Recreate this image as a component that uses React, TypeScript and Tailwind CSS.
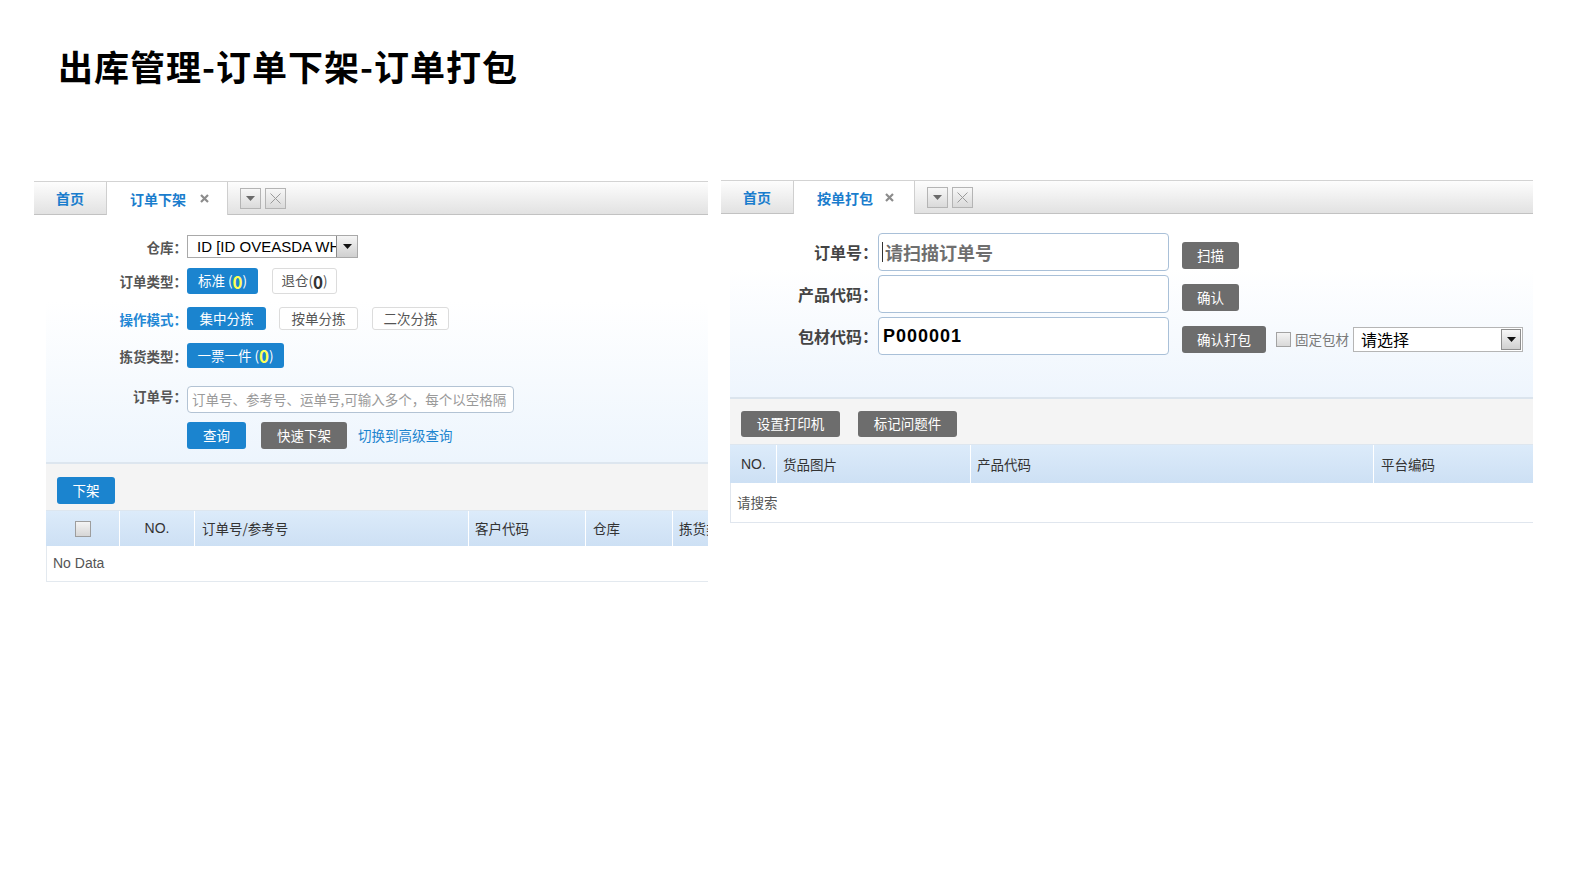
import React from "react";

function DropBox() {
  return (
    <div className="w-[21px] h-[21px] border border-[#b4b4b4] bg-gradient-to-b from-[#f7f7f7] to-[#dadada] flex items-center justify-center">
      <svg width="9" height="5" viewBox="0 0 9 5">
        <path d="M0 0H9L4.5 5Z" fill="#6a6a6a" />
      </svg>
    </div>
  );
}

function XBox() {
  return (
    <div className="w-[21px] h-[21px] border border-[#b4b4b4] bg-gradient-to-b from-[#f7f7f7] to-[#dadada] flex items-center justify-center">
      <svg width="11" height="11" viewBox="0 0 11 11">
        <path d="M0.5 0.5L10.5 10.5M10.5 0.5L0.5 10.5" stroke="#9a9a9a" strokeWidth="1" />
      </svg>
    </div>
  );
}

function TabBar({ label, xGap }: { label: string; xGap: string }) {
  return (
    <div className="flex h-[34px] border-t border-[#d3d3d3]">
      <div className="w-[73px] shrink-0 flex items-center justify-center border-b border-r border-b-[#c2c2c2] border-r-[#cfcfcf] bg-gradient-to-b from-[#fdfdfd] to-[#e2e2e2] text-[14px] font-bold text-[#1a7dcd]">
        首页
      </div>
      <div className="w-[121px] shrink-0 flex items-center bg-white border-r border-[#cfcfcf] pl-[23px]">
        <span className="text-[14px] font-bold text-[#1a7dcd] leading-none">{label}</span>
        <svg className={xGap} width="9" height="9" viewBox="0 0 9 9">
          <path d="M1 1L8 8M8 1L1 8" stroke="#8c8c8c" strokeWidth="2.2" />
        </svg>
      </div>
      <div className="flex-1 flex items-center border-b border-[#c2c2c2] bg-gradient-to-b from-[#fdfdfd] to-[#e2e2e2] pl-[12px] gap-[4px]">
        <DropBox />
        <XBox />
      </div>
    </div>
  );
}

function BlueBtn({ w, h, children }: { w: string; h: string; children: React.ReactNode }) {
  return (
    <div className={`${w} ${h} shrink-0 rounded-[3px] bg-[#1b84cf] text-white text-[13.5px] flex items-center justify-center leading-none`}>
      {children}
    </div>
  );
}

function WhiteBtn({ w, h, children }: { w: string; h: string; children: React.ReactNode }) {
  return (
    <div className={`${w} ${h} shrink-0 rounded-[3px] bg-white border border-[#dcdcdc] text-[#555] text-[13.5px] flex items-center justify-center leading-none`}>
      {children}
    </div>
  );
}

function GrayBtn({ w, h, children }: { w: string; h: string; children: React.ReactNode }) {
  return (
    <div className={`${w} ${h} shrink-0 rounded-[3px] bg-[#6d6d6d] text-white text-[13.5px] flex items-center justify-center leading-none`}>
      {children}
    </div>
  );
}

function LeftPanel() {
  const label = "w-[141px] shrink-0 text-right text-[13.5px] font-semibold text-[#555] leading-[20px]";
  return (
    <div className="w-[674px] mt-[1px]">
      <TabBar label="订单下架" xGap="ml-[14px]" />
      <div className="ml-[12px] h-[249px] border-b-2 border-[#dde6ef] bg-gradient-to-b from-white from-35% to-[#edf5fd] pt-[20px]">
        {/* 仓库 */}
        <div className="flex items-center h-[23px]">
          <div className={label}>仓库：</div>
          <div className="relative w-[171px] h-[23px] border border-[#a9a9a9] bg-white overflow-hidden">
            <div className="pl-[9px] pr-[22px] font-['Liberation_Sans',sans-serif] text-[15px] text-black leading-[21px] whitespace-nowrap overflow-hidden">
              ID [ID OVEASDA WH
            </div>
            <div className="absolute right-0 top-0 w-[21px] h-[21px] border-l border-[#8a8a8a] bg-gradient-to-b from-[#f5f5f5] to-[#cfcfcf] flex items-center justify-center">
              <svg width="9" height="5" viewBox="0 0 9 5">
                <path d="M0 0H9L4.5 5Z" fill="#111" />
              </svg>
            </div>
          </div>
        </div>
        {/* 订单类型 */}
        <div className="flex items-center h-[26px] mt-[10px]">
          <div className={label}>订单类型：</div>
          <BlueBtn w="w-[71px]" h="h-[26px]">
            <span>标准&nbsp;(</span>
            <span className="text-[#ffff55] font-bold text-[17px]">0</span>
            <span>)</span>
          </BlueBtn>
          <div className="ml-[14px]">
            <WhiteBtn w="w-[65px]" h="h-[26px]">
              <span>退仓(</span>
              <span className="text-[#333] font-bold text-[17px]">0</span>
              <span>)</span>
            </WhiteBtn>
          </div>
        </div>
        {/* 操作模式 */}
        <div className="flex items-center h-[23px] mt-[13px]">
          <div className="w-[141px] shrink-0 text-right text-[13.5px] font-semibold text-[#2488d5] leading-[20px]">操作模式：</div>
          <BlueBtn w="w-[79px]" h="h-[23px]">集中分拣</BlueBtn>
          <div className="ml-[13px]">
            <WhiteBtn w="w-[79px]" h="h-[23px]">按单分拣</WhiteBtn>
          </div>
          <div className="ml-[14px]">
            <WhiteBtn w="w-[77px]" h="h-[23px]">二次分拣</WhiteBtn>
          </div>
        </div>
        {/* 拣货类型 */}
        <div className="flex items-center h-[25px] mt-[13px]">
          <div className={label}>拣货类型：</div>
          <BlueBtn w="w-[97px]" h="h-[25px]">
            <span>一票一件&nbsp;(</span>
            <span className="text-[#ffff55] font-bold text-[17px]">0</span>
            <span>)</span>
          </BlueBtn>
        </div>
        {/* 订单号 */}
        <div className="flex items-start h-[27px] mt-[18px]">
          <div className={label}>订单号：</div>
          <div className="w-[327px] h-[27px] rounded-[4px] border border-[#b3c3d4] bg-white pl-[4px] text-[13.5px] text-[#9a9a9a] leading-[25px] whitespace-nowrap overflow-hidden">
            订单号、参考号、运单号,可输入多个，每个以空格隔
          </div>
        </div>
        {/* buttons */}
        <div className="flex items-center h-[27px] mt-[9px] pl-[141px]">
          <BlueBtn w="w-[59px]" h="h-[27px]">查询</BlueBtn>
          <div className="ml-[15px]">
            <GrayBtn w="w-[86px]" h="h-[27px]">快速下架</GrayBtn>
          </div>
          <div className="ml-[11px] text-[13.5px] text-[#1b84cf]">切换到高级查询</div>
        </div>
      </div>
      {/* toolbar */}
      <div className="ml-[12px] h-[46px] bg-[#f4f4f4] pl-[11px] pt-[13px]">
        <BlueBtn w="w-[58px]" h="h-[27px]">下架</BlueBtn>
      </div>
      {/* header */}
      <div className="ml-[12px] h-[36px] flex border-t border-[#dde6ef] bg-gradient-to-b from-[#dcebfa] to-[#cde0f4] text-[13.5px] text-[#333] overflow-hidden whitespace-nowrap">
        <div className="w-[74px] shrink-0 flex items-center justify-center border-r border-white">
          <div className="w-[16px] h-[16px] border border-[#9d9d9d] bg-gradient-to-b from-[#f4f4f4] to-[#d6d6d6]" />
        </div>
        <div className="w-[75px] shrink-0 flex items-center justify-center border-r border-white font-['Liberation_Sans',sans-serif] text-[14px]">NO.</div>
        <div className="w-[274px] shrink-0 flex items-center pl-[7px] border-r border-white">订单号/参考号</div>
        <div className="w-[117px] shrink-0 flex items-center pl-[6px] border-r border-white">客户代码</div>
        <div className="w-[87px] shrink-0 flex items-center pl-[7px] border-r border-white">仓库</div>
        <div className="w-[87px] shrink-0 flex items-center pl-[6px]">拣货类型</div>
      </div>
      <div className="ml-[12px] h-[36px] border-b border-l border-[#e3e9ef] bg-white flex items-center pl-[6px] font-['Liberation_Sans',sans-serif] text-[14px] text-[#555]">
        No Data
      </div>
    </div>
  );
}

function RightPanel() {
  const label = "w-[148px] shrink-0 text-right text-[16px] font-semibold text-[#444] leading-[22px]";
  const input = "w-[291px] h-[38px] shrink-0 rounded-[4px] border border-[#a9c0d8] bg-white";
  return (
    <div className="w-[812px] ml-[13px]">
      <TabBar label="按单打包" xGap="ml-[12px]" />
      <div className="ml-[9px] h-[185px] border-b-2 border-[#dbe4ed] bg-gradient-to-b from-white from-30% to-[#eef5fd] pt-[19px]">
        <div className="flex items-center h-[38px]">
          <div className={label}>订单号：</div>
          <div className={`${input} flex items-center pl-[3px]`}>
            <div className="w-[1px] h-[20px] bg-[#333]" />
            <span className="ml-[2px] text-[18px] font-semibold text-[#6f6f6f] leading-none">请扫描订单号</span>
          </div>
          <div className="ml-[13px] mt-[7px]">
            <GrayBtn w="w-[57px]" h="h-[27px]">扫描</GrayBtn>
          </div>
        </div>
        <div className="flex items-center h-[38px] mt-[4px]">
          <div className={label}>产品代码：</div>
          <div className={input} />
          <div className="ml-[13px] mt-[7px]">
            <GrayBtn w="w-[57px]" h="h-[27px]">确认</GrayBtn>
          </div>
        </div>
        <div className="flex items-center h-[38px] mt-[4px]">
          <div className={label}>包材代码：</div>
          <div className={`${input} flex items-center pl-[4px]`}>
            <span className="font-['Liberation_Sans',sans-serif] text-[18px] font-bold text-black tracking-[1px] leading-none">P000001</span>
          </div>
          <div className="ml-[13px] mt-[7px] flex items-center">
            <GrayBtn w="w-[84px]" h="h-[27px]">确认打包</GrayBtn>
            <div className="ml-[10px] w-[15px] h-[15px] border border-[#a3a3a3] bg-gradient-to-b from-[#f4f4f4] to-[#d9d9d9]" />
            <span className="ml-[4px] text-[13.5px] text-[#7a7a7a]">固定包材</span>
            <div className="relative ml-[4px] w-[170px] h-[25px] border border-[#b5b5b5] bg-white">
              <span className="absolute left-[7px] top-0 text-[16px] leading-[23px] text-black">请选择</span>
              <div className="absolute right-[1px] top-[1px] w-[20px] h-[21px] border border-[#8e8e8e] bg-gradient-to-b from-[#f7f7f7] to-[#d0d0d0] flex items-center justify-center">
                <svg width="9" height="5" viewBox="0 0 9 5">
                  <path d="M0 0H9L4.5 5Z" fill="#111" />
                </svg>
              </div>
            </div>
          </div>
        </div>
      </div>
      {/* toolbar */}
      <div className="ml-[9px] h-[45px] bg-[#f4f4f4] pl-[11px] pt-[12px] flex items-start">
        <GrayBtn w="w-[99px]" h="h-[26px]">设置打印机</GrayBtn>
        <div className="ml-[18px]">
          <GrayBtn w="w-[99px]" h="h-[26px]">标记问题件</GrayBtn>
        </div>
      </div>
      <div className="ml-[9px] h-[39px] flex border-t border-[#dde6ef] bg-gradient-to-b from-[#dcebfa] to-[#cde0f4] text-[13.5px] text-[#333] whitespace-nowrap">
        <div className="w-[47px] shrink-0 flex items-center pl-[11px] border-r border-white font-['Liberation_Sans',sans-serif] text-[14px]">NO.</div>
        <div className="w-[194px] shrink-0 flex items-center pl-[6px] border-r border-white">货品图片</div>
        <div className="w-[403px] shrink-0 flex items-center pl-[6px] border-r border-white">产品代码</div>
        <div className="flex-1 flex items-center pl-[7px]">平台编码</div>
      </div>
      <div className="ml-[9px] h-[40px] border-b border-l border-[#e0e6ee] bg-white flex items-center pl-[6px] text-[13.5px] text-[#555]">
        请搜索
      </div>
    </div>
  );
}

export default function App() {
  return (
    <div className="w-[1590px] h-[882px] bg-white overflow-hidden font-['Noto_Sans_CJK_SC','Noto_Sans',sans-serif]">
      <h1 className="pl-[58px] pt-[48px] text-[35px] font-bold tracking-[1px] leading-[35px] text-black">
        出库管理-订单下架-订单打包
      </h1>
      <div className="flex items-start mt-[97px] pl-[34px]">
        <LeftPanel />
        <RightPanel />
      </div>
    </div>
  );
}
